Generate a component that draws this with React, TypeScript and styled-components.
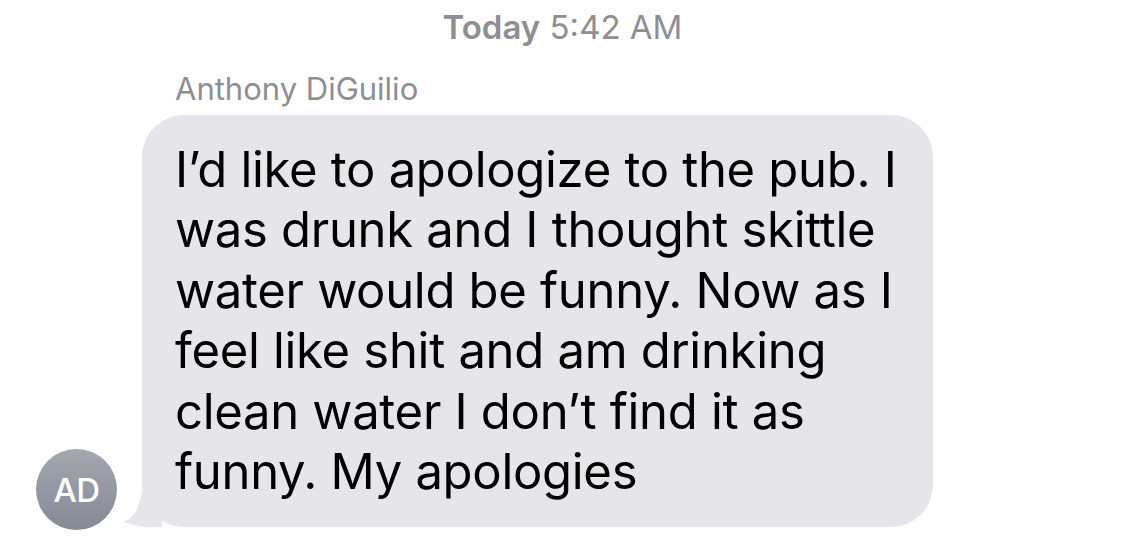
import React from "react";
import styled, { createGlobalStyle } from "styled-components";

const GlobalStyle = createGlobalStyle`
  html, body {
    margin: 0;
    padding: 0;
    background: #ffffff;
  }
  body {
    font-family: Inter, "Noto Sans", "Liberation Sans", sans-serif;
  }
`;

const Screen = styled.div`
  width: 1125px;
  height: 549px;
  overflow: hidden;
  display: flex;
  flex-direction: column;
`;

const Stamp = styled.div`
  text-align: center;
  font-size: 33px;
  color: #8e8e93;
  padding-top: 8px;
  line-height: 38px;
  b {
    font-weight: 600;
  }
`;

const Thread = styled.div`
  display: flex;
  align-items: flex-end;
  padding-left: 36px;
  margin-top: 24px;
`;

const Avatar = styled.div`
  width: 81px;
  height: 81px;
  border-radius: 50%;
  background: linear-gradient(#a3a7b0, #868a94);
  color: #fff;
  font-size: 33px;
  font-weight: 500;
  display: flex;
  align-items: center;
  justify-content: center;
  margin-bottom: -3px;
  letter-spacing: -0.5px;
`;

const Column = styled.div`
  display: flex;
  flex-direction: column;
  margin-left: 25px;
`;

const Sender = styled.div`
  font-size: 31px;
  color: #8e8e93;
  padding-left: 33px;
  line-height: 38px;
  margin-bottom: 7px;
`;

const Bubble = styled.div`
  position: relative;
  width: 791px;
  box-sizing: border-box;
  background: #e5e5ea;
  border-radius: 42px;
  padding: 25px 20px 25px 33px;
  font-size: 49px;
  line-height: 60.4px;
  color: #000;
  letter-spacing: -0.3px;
`;

const Line = styled.div`
  position: relative;
  white-space: nowrap;
`;

const Tail = styled.svg`
  position: absolute;
  left: -20px;
  bottom: 0;
  width: 60px;
  height: 40px;
`;

export default function App() {
  const lines = [
    "I\u2019d like to apologize to the pub. I",
    "was drunk and I thought skittle",
    "water would be funny. Now as I",
    "feel like shit and am drinking",
    "clean water I don\u2019t find it as",
    "funny. My apologies",
  ];
  return (
    <Screen>
      <GlobalStyle />
      <Stamp>
        <b>Today</b> 5:42 AM
      </Stamp>
      <Thread>
        <Avatar>AD</Avatar>
        <Column>
          <Sender>Anthony DiGuilio</Sender>
          <Bubble>
            <Tail viewBox="0 0 60 40">
              <path
                d="M20 0 L40 0 L40 40 L30 40 C20 40 10 38 2 35 C12 30 19 20 20 0 Z"
                fill="#e5e5ea"
              />
            </Tail>
            {lines.map((l, i) => (
              <Line key={i}>{l}</Line>
            ))}
          </Bubble>
        </Column>
      </Thread>
    </Screen>
  );
}
